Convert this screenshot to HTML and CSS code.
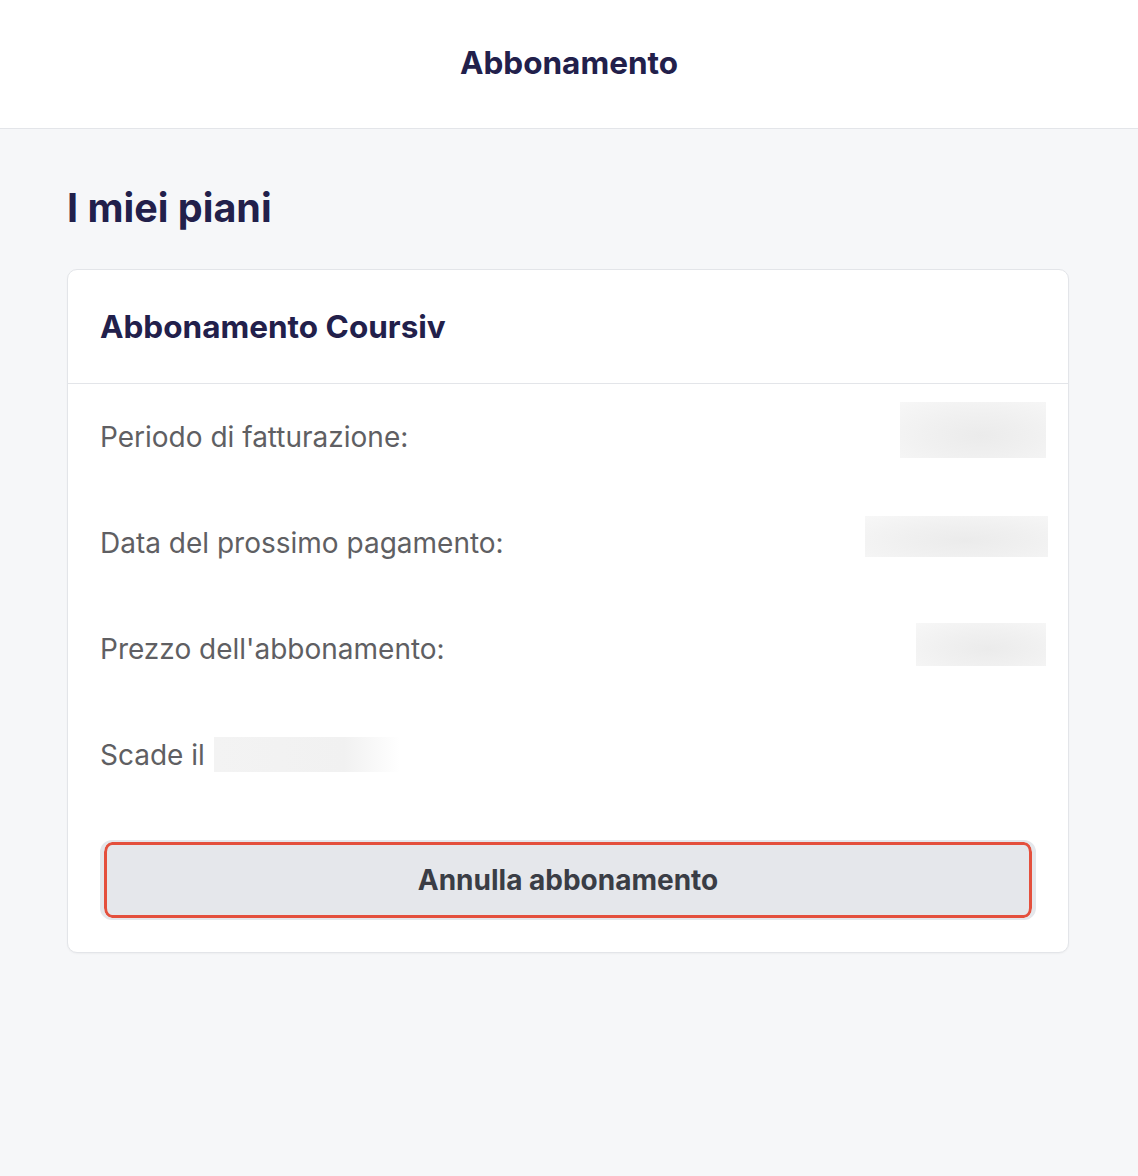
FILE: index.html
```
<!DOCTYPE html>
<html lang="it">
<head>
<meta charset="utf-8">
<title>Abbonamento</title>
<link rel="stylesheet" href="styles.css">
</head>
<body>
<header class="topbar">
  <h1 class="topbar-title">Abbonamento</h1>
</header>
<main class="content">
  <h2 class="page-title">I miei piani</h2>
  <section class="card">
    <div class="card-head">
      <h3 class="card-title">Abbonamento Coursiv</h3>
    </div>
    <div class="card-body">
      <div class="row">
        <span class="label">Periodo di fatturazione:</span>
        <span class="blur blur-1"></span>
      </div>
      <div class="row">
        <span class="label">Data del prossimo pagamento:</span>
        <span class="blur blur-2"></span>
      </div>
      <div class="row">
        <span class="label">Prezzo dell'abbonamento:</span>
        <span class="blur blur-3"></span>
      </div>
      <div class="row row-left">
        <span class="label">Scade il</span>
        <span class="blur blur-4"></span>
      </div>
      <button class="cancel-btn" type="button">Annulla abbonamento</button>
    </div>
  </section>
</main>
</body>
</html>
```
FILE: styles.css
```
* { box-sizing: border-box; }
html, body { margin: 0; padding: 0; }
body {
  background: #f6f7f9;
  font-family: Inter, "Noto Sans", "Liberation Sans", sans-serif;
  min-height: 1176px;
}
.topbar {
  background: #ffffff;
  height: 129px;
  border-bottom: 1px solid #e3e5e9;
  display: flex;
  align-items: center;
  justify-content: center;
  padding-bottom: 4px;
}
.topbar-title {
  margin: 0;
  font-size: 31.5px;
  font-weight: 700;
  color: #22204b;
}
.content {
  padding: 0 69px 0 67px;
}
.page-title {
  margin: 0;
  padding-top: 52px;
  height: 140px;
  font-size: 39.5px;
  font-weight: 700;
  color: #22204b;
  line-height: 54px;
}
.card {
  background: #ffffff;
  border: 1px solid #e3e5e9;
  border-radius: 10px;
  box-shadow: 0 1px 2px rgba(0,0,0,0.04);
}
.card-head {
  height: 114px;
  display: flex;
  align-items: center;
  padding: 0 32px;
  border-bottom: 1px solid #e3e5e9;
}
.card-title {
  margin: 0;
  font-size: 31.5px;
  font-weight: 700;
  color: #22204b;
}
.card-body {
  padding: 0 32px 32px 32px;
}
.row {
  height: 106px;
  display: flex;
  align-items: center;
  justify-content: space-between;
}
.row-left {
  justify-content: flex-start;
  gap: 9px;
}
.label {
  font-size: 28px;
  color: #5f5f63;
}
.blur {
  display: block;
  background: radial-gradient(ellipse at 55% 60%, #ebebeb 0%, #f0f0f0 45%, #f7f7f7 100%);
}
.blur-1 { width: 146px; height: 56px; margin-right: -10px; margin-top: -15px; }
.blur-2 { width: 183px; height: 41px; margin-right: -12px; margin-top: -14px; }
.blur-3 { width: 130px; height: 43px; margin-right: -10px; margin-top: -10px; }
.blur-4 { width: 186px; height: 35px; margin-top: -2px; background: linear-gradient(90deg, #f3f3f3 0%, #f1f1f1 70%, #ffffff 100%); }
.cancel-btn {
  display: block;
  width: 100%;
  height: 80px;
  margin-top: 32px;
  background: #e5e7eb;
  border: solid #e5e7eb;
  border-width: 2px 4px;
  border-radius: 12px;
  box-shadow: inset 0 0 0 3px #e4503d;
  font-family: Inter, "Noto Sans", "Liberation Sans", sans-serif;
  font-size: 28px;
  font-weight: 700;
  color: #3a3d45;
  cursor: pointer;
}
```
